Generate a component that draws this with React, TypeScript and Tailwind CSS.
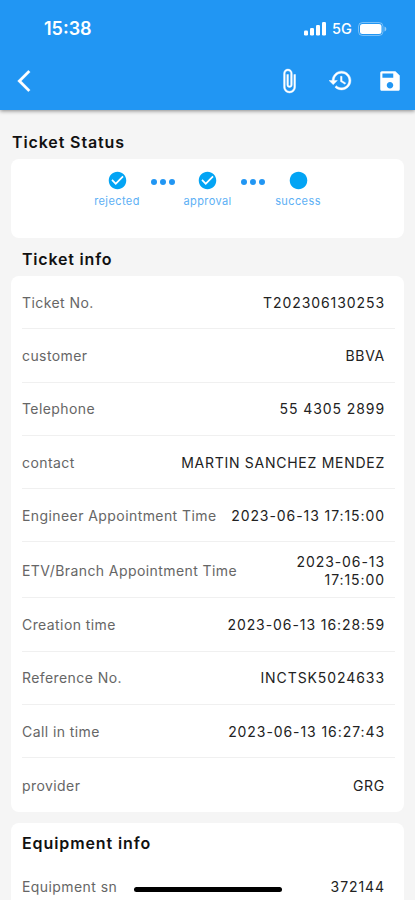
import React from 'react';
import { MdCheckCircle, MdCircle } from 'react-icons/md';

type Field = {
  label: string;
  value: string;
  tall?: boolean;
};

const steps = [
  { label: 'rejected', done: true },
  { label: 'approval', done: true },
  { label: 'success', done: false },
];

const ticketFields: Field[] = [
  { label: 'Ticket No.', value: 'T202306130253' },
  { label: 'customer', value: 'BBVA' },
  { label: 'Telephone', value: '55 4305 2899' },
  { label: 'contact', value: 'MARTIN SANCHEZ MENDEZ' },
  { label: 'Engineer Appointment Time', value: '2023-06-13 17:15:00' },
  { label: 'ETV/Branch Appointment Time', value: '2023-06-13 17:15:00', tall: true },
  { label: 'Creation time', value: '2023-06-13 16:28:59' },
  { label: 'Reference No.', value: 'INCTSK5024633' },
  { label: 'Call in time', value: '2023-06-13 16:27:43' },
  { label: 'provider', value: 'GRG' },
];

const icons = {
  back: 'M17.77 3.77 16 2 6 12l10 10 1.77-1.77L9.54 12z',
  attach:
    'M16.5 6v11.5c0 2.210-1.790 4-4 4s-4-1.790-4-4V5a2.500 2.500 0 0 1 5 0v10.500c0 .55-.45 1-1 1s-1-.45-1-1V6H10v9.500a2.500 2.500 0 0 0 5 0V5c0-2.210-1.790-4-4-4S7 2.790 7 5v12.500c0 3.040 2.460 5.500 5.500 5.500s5.500-2.460 5.500-5.500V6z',
  history:
    'M13 3c-4.970 0-9 4.030-9 9H1l3.890 3.890.07.14L9 12H6c0-3.870 3.130-7 7-7s7 3.130 7 7-3.130 7-7 7c-1.930 0-3.680-.79-4.940-2.060l-1.420 1.420C8.270 19.990 10.510 21 13 21c4.970 0 9-4.030 9-9s-4.030-9-9-9zm-1 5v5l4.280 2.540.72-1.210-3.500-2.080V8z',
  save: 'M17 3H4.500C3.700 3 3 3.700 3 4.500v15c0 .8.7 1.500 1.500 1.500h15c.8 0 1.500-.7 1.500-1.500V7zm-5 16c-1.660 0-3-1.340-3-3s1.340-3 3-3 3 1.340 3 3-1.340 3-3 3zm3-10H5V5h10z',
};

const Icon: React.FC<{ path: string; size: number; weight?: number; className?: string }> = ({
  path,
  size,
  weight = 0,
  className,
}) => (
  <svg
    width={size}
    height={size}
    viewBox="0 0 24 24"
    fill="currentColor"
    stroke="currentColor"
    strokeWidth={weight}
    className={className}
  >
    <path d={path} />
  </svg>
);

const StatusBar: React.FC = () => (
  <div className="flex h-[57px] items-center justify-between pr-[28px] pl-[44px]">
    <span className="text-[18px] font-semibold">15:38</span>
    <div className="flex items-center">
      <svg className="h-[14px] w-[22px]" viewBox="0 0 22 14" fill="currentColor">
        <rect x="0" y="8.5" width="4" height="5" rx="1.2" />
        <rect x="6" y="6" width="4" height="7.5" rx="1.2" />
        <rect x="12" y="3" width="4" height="10.5" rx="1.2" />
        <rect x="18" y="0" width="4" height="13.5" rx="1.2" />
      </svg>
      <span className="mt-px ml-[6px] w-[20px] text-[14.5px] leading-none font-medium">5G</span>
      <svg className="ml-[6px] h-[14px] w-[29px]" viewBox="0 0 29 14" fill="none">
        <rect x="0.5" y="0.5" width="24.5" height="13" rx="4" stroke="white" strokeOpacity="0.4" />
        <rect x="2" y="2" width="21.5" height="10" rx="2.5" fill="white" />
        <path d="M26.5 4.500c1.200.5 1.800 1.400 1.800 2.500s-.6 2-1.800 2.500z" fill="white" fillOpacity="0.5" />
      </svg>
    </div>
  </div>
);

const FieldRow: React.FC<{ field: Field; last?: boolean }> = ({ field, last }) => {
  const numeric = /\d/.test(field.value);

  return (
    <div
      className={`flex items-center justify-between pr-[9px] ${
        field.tall ? 'h-[56px] pt-px' : 'h-[53.3px]'
      } ${last ? '' : 'border-b border-[#f0f0f0]'}`}
    >
      <span className="shrink-0 text-[14px] tracking-[0.42px] whitespace-nowrap text-[#666666]">
        {field.label}
      </span>
      <span
        className={`mr-px pt-px text-right text-[14px] leading-[18px] text-[#222222] ${
          numeric ? 'tracking-[0.92px]' : 'tracking-[0.73px]'
        } ${field.tall ? 'w-[100px]' : 'whitespace-nowrap'}`}
      >
        {field.value}
      </span>
    </div>
  );
};

const App: React.FC = () => {
  return (
    <div className="relative h-[900px] w-full overflow-hidden bg-[#f5f5f5] font-['Inter',sans-serif] text-black">
      <header className="relative h-[110px] bg-[#2196f3] text-white shadow-[0_1px_4px_rgba(0,0,0,0.45)]">
        <StatusBar />
        <div className="flex h-[47px] items-center pr-[12px] pl-[11px]">
          <Icon path={icons.back} size={26} weight={0.2} />
          <div className="ml-auto flex items-center">
            <Icon path={icons.attach} size={26} weight={0.4} className="mr-[26px]" />
            <Icon path={icons.history} size={25} weight={0.4} className="mr-[24px]" />
            <Icon path={icons.save} size={26} />
          </div>
        </div>
      </header>

      <main className="px-[11px]">
        <h2 className="flex h-[49px] items-center pt-[14px] pl-px text-[16px] font-semibold tracking-[0.88px] text-[#111111]">
          Ticket Status
        </h2>
        <section className="flex h-[79px] justify-center rounded-lg bg-white pt-[11px]">
          {steps.map((step, i) => (
            <React.Fragment key={step.label}>
              {i > 0 && (
                <div className="flex w-[31px] justify-center gap-[3px] pt-[9px] pl-px">
                  <span className="size-[6px] shrink-0 rounded-full bg-[#2196f3]" />
                  <span className="size-[6px] shrink-0 rounded-full bg-[#2196f3]" />
                  <span className="size-[6px] shrink-0 rounded-full bg-[#2196f3]" />
                </div>
              )}
              <div className="flex w-[59.500px] flex-col items-center text-[#03a4f4]">
                {step.done ? <MdCheckCircle size={21} /> : <MdCircle size={21} />}
                <span className="mt-[3px] text-[11px] leading-[14px] tracking-[0.4px] text-[#5cb0f5]">
                  {step.label}
                </span>
              </div>
            </React.Fragment>
          ))}
        </section>

        <h2 className="flex h-[38px] items-center pt-[4px] pl-[11px] text-[16px] font-semibold tracking-[0.8px] text-[#111111]">
          Ticket info
        </h2>
        <section className="rounded-lg bg-white pr-[9px] pl-[11px]">
          {ticketFields.map((field, i) => (
            <FieldRow key={field.label} field={field} last={i === ticketFields.length - 1} />
          ))}
        </section>

        <section className="mt-[11px] rounded-lg bg-white pr-[9px] pl-[11px]">
          <h2 className="flex h-[38px] items-center pt-[2px] text-[16px] font-semibold tracking-[0.9px] text-[#111111]">
            Equipment info
          </h2>
          <FieldRow field={{ label: 'Equipment sn', value: '372144' }} />
        </section>
      </main>

      {/* home indicator */}
      <div className="absolute bottom-[8px] left-[134px] h-[5px] w-[148px] rounded-full bg-black" />
    </div>
  );
};

export default App;
